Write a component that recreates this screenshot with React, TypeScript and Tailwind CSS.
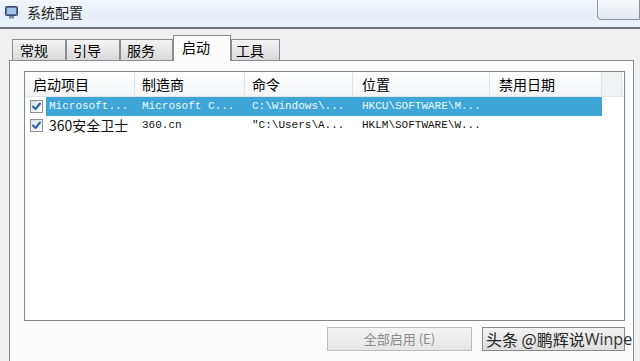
import React from 'react';

const cjk = "font-['Noto_Sans_CJK_SC','Microsoft_YaHei',sans-serif]";
const mono = "font-['Liberation_Mono','Noto_Sans_CJK_SC',monospace]";

const tabs = [
  { label: '常规', w: 'w-[54px]', pl: 'pl-[7px]' },
  { label: '引导', w: 'w-[54px]', pl: 'pl-[6px]' },
  { label: '服务', w: 'w-[53px]', pl: 'pl-[6px]' },
  { label: '启动', w: 'w-[58px]', pl: 'pl-[8px]', active: true },
  { label: '工具', w: 'w-[49px]', pl: 'pl-[4px]' },
];

const rows = [
  {
    name: 'Microsoft...',
    maker: 'Microsoft C...',
    cmd: 'C:\\Windows\\...',
    loc: 'HKCU\\SOFTWARE\\M...',
    selected: true,
  },
  {
    name: '360安全卫士',
    maker: '360.cn',
    cmd: '"C:\\Users\\A...',
    loc: 'HKLM\\SOFTWARE\\W...',
  },
];

function CheckBox() {
  return (
    <div className="w-[13px] h-[13px] border border-[#8e8f8f] bg-gradient-to-br from-[#d8e2ea] to-[#ffffff] flex items-center justify-center">
      <svg width="11" height="11" viewBox="0 0 11 11">
        <path d="M2 5.5 L4.5 8 L9 2.5" fill="none" stroke="#2a63a8" strokeWidth="2" strokeLinecap="round" strokeLinejoin="round" />
      </svg>
    </div>
  );
}

export default function App() {
  return (
    <div className={`w-[640px] h-[361px] overflow-hidden bg-[#f0f0f0] flex flex-col text-black ${cjk}`}>
      {/* title bar */}
      <div className="h-[29px] shrink-0 flex items-start bg-gradient-to-b from-[#f2f7fb] via-[#e6eef7] to-[#ebf2f9] border-b-2 border-[#707478]">
        <div className="h-full flex items-center pl-[5px] pb-[3px] gap-[9px]">
          <svg width="13" height="13" viewBox="0 0 13 13">
            <rect x="0.5" y="0.5" width="12" height="9" rx="1" fill="#5a6f9e" stroke="#39476b" />
            <rect x="2" y="2" width="9" height="6" fill="#9fc3ec" />
            <rect x="4" y="10" width="5" height="2.5" fill="#7c8aa8" />
          </svg>
          <span className="text-[14px] leading-none text-[#1e1e1e]">系统配置</span>
        </div>
        <div className="ml-auto mt-[-2px] w-[43px] h-[22px] border border-[#8d939c] rounded-bl-[4px] bg-gradient-to-b from-[#f7f9fb] to-[#e4e9ef]" />
      </div>

      {/* body */}
      <div className="flex-1 flex flex-col pl-[9px] pt-[6px]">
        {/* tabs */}
        <div className="flex items-end pl-[3px] -mb-px relative z-10">
          {tabs.map((t) =>
            t.active ? (
              <div
                key={t.label}
                className={`${t.w} ${t.pl} h-[26px] border border-b-0 border-[#898c95] bg-[#fcfcfc] text-[14px] leading-[22px]`}
              >
                {t.label}
              </div>
            ) : (
              <div
                key={t.label}
                className={`${t.w} ${t.pl} h-[22px] border border-[#898c95] bg-gradient-to-b from-[#f3f3f3] to-[#dadada] text-[14px] leading-[20px]`}
              >
                {t.label}
              </div>
            )
          )}
        </div>

        {/* panel */}
        <div className="w-[625px] h-[310px] shrink-0 border border-[#898c95] bg-[#fcfcfc] pl-[14px] pt-[10px]">
          {/* list view */}
          <div className="w-[601px] h-[250px] border border-[#828790] bg-white flex flex-col">
            <div className="h-[25px] flex border-b border-[#e3e5e8] bg-gradient-to-b from-[#ffffff] to-[#f3f4f6] text-[14px]">
              <div className="w-[110px] pl-[8px] border-r border-[#dfe2e6] flex items-center">启动项目</div>
              <div className="w-[110px] pl-[7px] border-r border-[#dfe2e6] flex items-center">制造商</div>
              <div className="w-[108px] pl-[7px] border-r border-[#dfe2e6] flex items-center">命令</div>
              <div className="w-[137px] pl-[9px] border-r border-[#dfe2e6] flex items-center">位置</div>
              <div className="w-[112px] pl-[9px] border-r border-[#dfe2e6] flex items-center">禁用日期</div>
              <div className="w-[20px] border-r border-[#dfe2e6] bg-[#f1f2f4]" />
            </div>
            {rows.map((r) => (
              <div key={r.name} className="h-[19px] flex items-center">
                <div className="w-[21px] pl-[5px] flex items-center">
                  <CheckBox />
                </div>
                <div
                  className={`w-[556px] h-full flex items-center ${
                    r.selected ? 'bg-[#3ea6d6] text-[#eef7fc]' : 'text-[#111]'
                  }`}
                >
                  <div className={`w-[89px] pl-[3px] whitespace-nowrap ${r.selected ? `${mono} text-[11px]` : 'text-[14px]'}`}>
                    {r.name}
                  </div>
                  <div className={`w-[110px] pl-[7px] whitespace-nowrap text-[11px] ${mono}`}>{r.maker}</div>
                  <div className={`w-[108px] pl-[7px] whitespace-nowrap text-[11px] ${mono}`}>{r.cmd}</div>
                  <div className={`w-[137px] pl-[9px] whitespace-nowrap text-[11px] ${mono}`}>{r.loc}</div>
                  <div className="w-[112px]" />
                </div>
              </div>
            ))}
          </div>

          {/* buttons */}
          <div className="w-[601px] flex justify-end gap-[10px] mt-[6px]">
            <div className="w-[145px] h-[24px] border border-[#bcbcbc] bg-gradient-to-b from-[#f4f4f4] to-[#e5e5e5] flex items-center justify-center text-[13px] text-[#8c8c8c]">
              全部启用 (E)
            </div>
            <div className="w-[143px] h-[24px] border border-[#8a8a8a] bg-gradient-to-b from-[#f3f3f3] to-[#dedede] flex items-center pl-[3px] overflow-visible whitespace-nowrap text-[16px] text-[#222]">
              头条 @鹏辉说<span className="font-['Open_Sans',sans-serif] text-[#333]">Winpe</span>
            </div>
          </div>
        </div>
      </div>
    </div>
  );
}
